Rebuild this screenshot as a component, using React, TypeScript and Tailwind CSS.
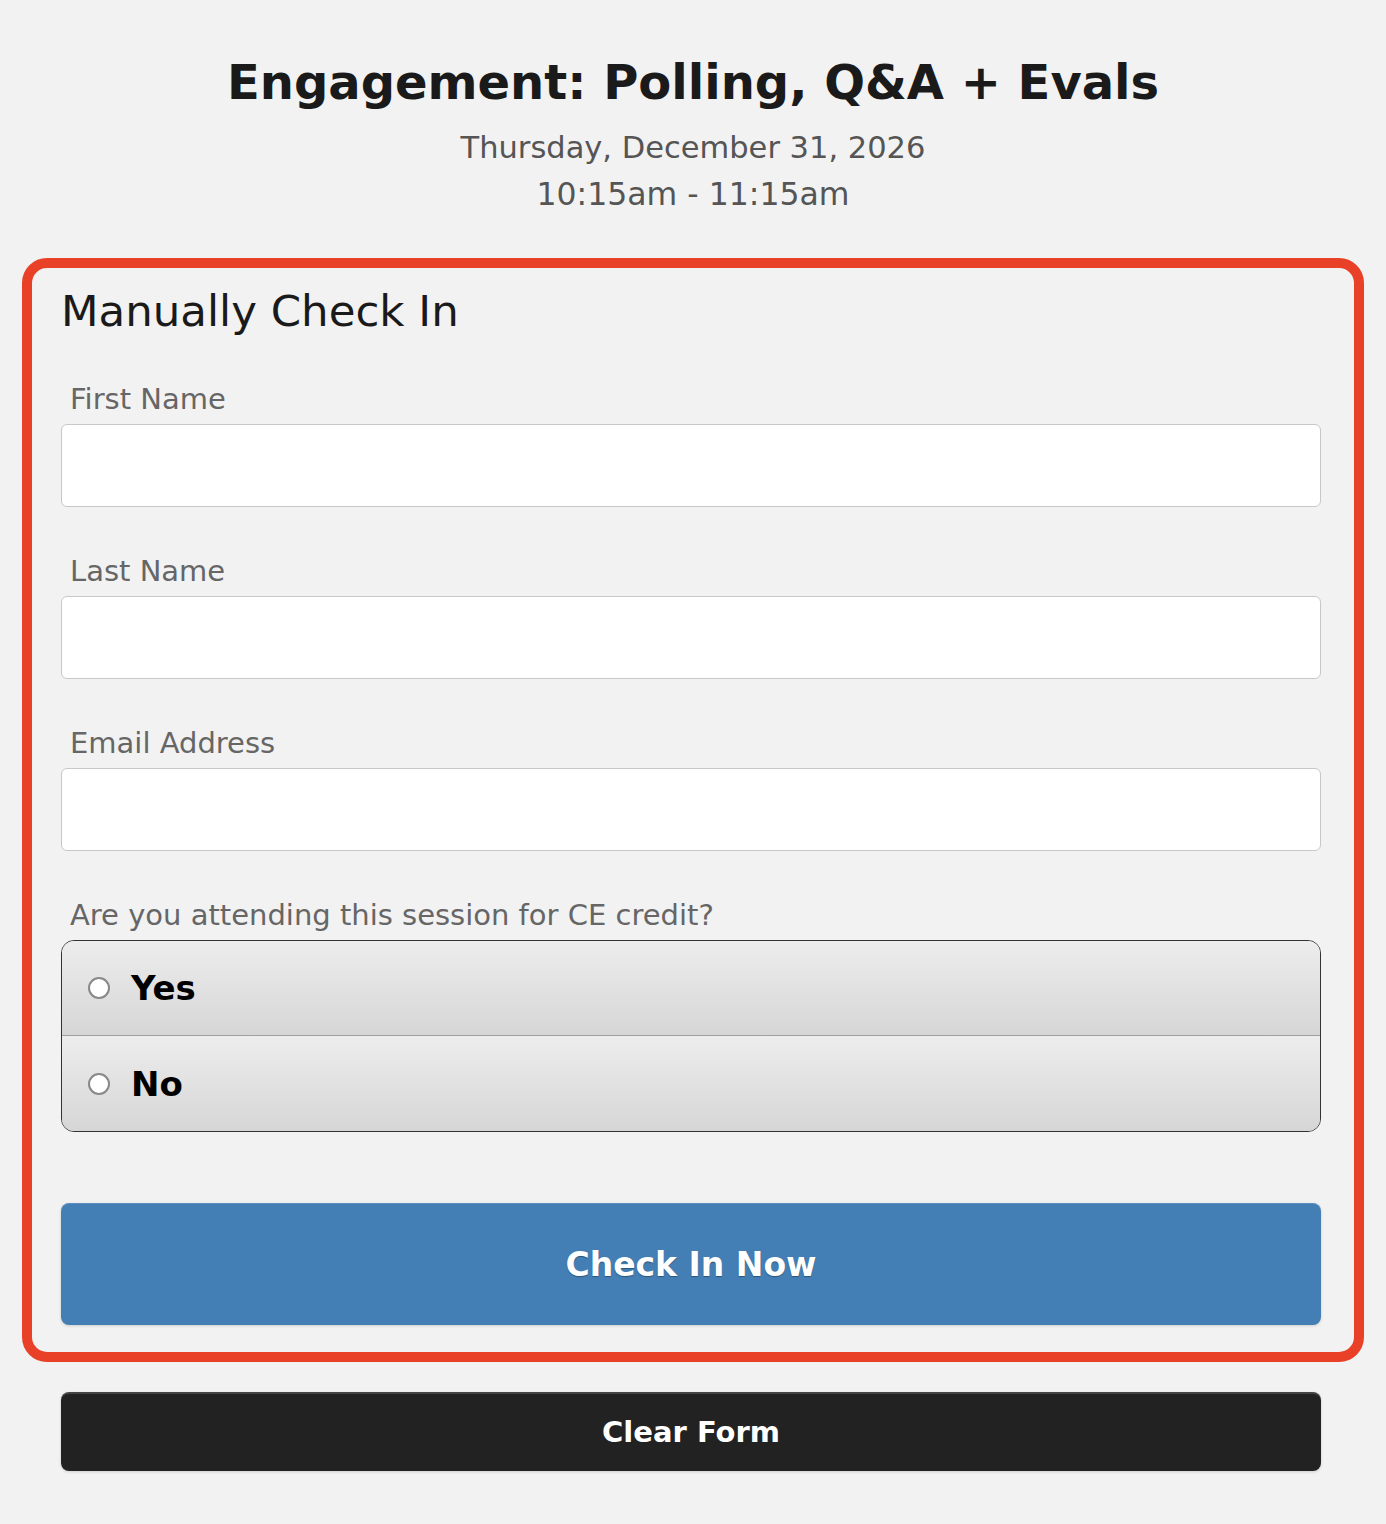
import React from 'react';

const fieldLabels = ['First Name', 'Last Name', 'Email Address'];

function Field({ label }: { label: string }) {
  return (
    <div className="mb-[47px]">
      <label className="block pl-[9px] text-[29px] leading-[34px] text-[#666]">{label}</label>
      <input
        type="text"
        className="mt-[8px] block h-[83px] w-full rounded-[6px] border border-[#c8c8c8] bg-white px-4 text-[28px] outline-none"
      />
    </div>
  );
}

function RadioRow({ label, last }: { label: string; last?: boolean }) {
  return (
    <label
      className={`flex h-[95px] items-center bg-gradient-to-b from-[#ededed] to-[#d6d6d6] pl-[26px] ${
        last ? '' : 'border-b border-[#a0a0a0]'
      }`}
    >
      <span className="h-[22px] w-[22px] rounded-full border-2 border-[#888] bg-white" />
      <span className="ml-[21px] text-[34px] font-bold leading-[40px] text-black">{label}</span>
    </label>
  );
}

export default function App() {
  return (
    <div className="min-h-[1524px] bg-[#f2f2f2] pb-[53px] font-['DejaVu_Sans',Verdana,sans-serif]">
      <div className="pt-[54px] text-center">
        <h1 className="text-[48px] font-bold leading-[56px] text-[#1a1a1a]">Engagement: Polling, Q&amp;A + Evals</h1>
        <div className="mt-[15px] text-[31px] leading-[46px] text-[#555]">
          <div className="text-[30.5px]">Thursday, December 31, 2026</div>
          <div className="text-[31.5px]">10:15am - 11:15am</div>
        </div>
      </div>

      <div className="mx-[22px] mt-[41px] rounded-[25px] border-[10px] border-[#e94128] pb-[27px] pl-[29px] pr-[33px] pt-[17px]">
        <h2 className="text-[43.5px] leading-[52px] text-[#1a1a1a]">Manually Check In</h2>
        <div className="mt-[45px]">
          {fieldLabels.map((l) => (
            <Field key={l} label={l} />
          ))}
        </div>
        <div>
          <div className="pl-[9px] text-[29px] leading-[34px] text-[#666]">
            Are you attending this session for CE credit?
          </div>
          <div className="mt-[8px] overflow-hidden rounded-[13px] border border-[#333]">
            <RadioRow label="Yes" />
            <RadioRow label="No" last />
          </div>
        </div>
        <button className="mt-[71px] flex h-[122px] w-full items-center justify-center rounded-[8px] border-t border-[#5b90c0] bg-[#437fb5] text-[33px] font-bold text-white shadow-[0_1px_3px_rgba(0,0,0,0.15)] [text-shadow:0_1px_1px_rgba(0,0,0,0.35)]">
          Check In Now
        </button>
      </div>

      <div className="pl-[61px] pr-[65px] pt-[30px]">
        <button className="flex h-[79px] w-full items-center justify-center rounded-[8px] border-t-2 border-[#444] bg-[#222] text-[29px] font-bold text-white shadow-[0_1px_3px_rgba(0,0,0,0.15)]">
          Clear Form
        </button>
      </div>
    </div>
  );
}
